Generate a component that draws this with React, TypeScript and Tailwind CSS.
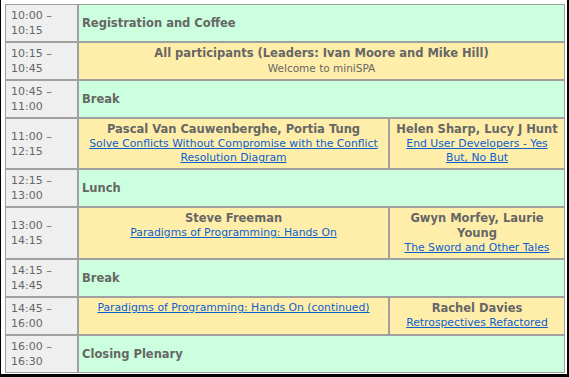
import React from "react";

const font = { fontFamily: '"DejaVu Sans", Verdana, sans-serif' };

function Time({ a, b }: { a: string; b: string }) {
  return (
    <td className="border border-[#a0a0a0] bg-[#efefef] align-middle px-[5px] py-[3px] text-[11px] leading-[15px] text-[#666]">
      <div>{a} –</div>
      <div>{b}</div>
    </td>
  );
}

function Green({ t }: { t: string }) {
  return (
    <td colSpan={2} className="border border-[#a0a0a0] bg-[#ccffdd] align-middle px-[3px] py-[3px] text-[11.5px] leading-[15px] font-bold text-[#666]">
      {t}
    </td>
  );
}

function Yellow({ name, link, span, sub }: { name?: string; link?: string[]; span?: number; sub?: string }) {
  return (
    <td colSpan={span} className="border border-[#a0a0a0] bg-[#ffeeaa] align-top text-center px-[3px] py-[3px] text-[#666]">
      {name && <div className="text-[11.5px] leading-[15px] font-bold">{name}</div>}
      {sub && <div className="text-[10.5px] leading-[14px]">{sub}</div>}
      {link && (
        <div className="text-[10.8px] leading-[14px]">
          <a href="#" className="text-[#0b5fd0] underline">
            {link.map((l, i) => (
              <React.Fragment key={i}>
                {i > 0 && <br />}
                {l}
              </React.Fragment>
            ))}
          </a>
        </div>
      )}
    </td>
  );
}

export default function App() {
  return (
    <div className="w-[569px] h-[377px] bg-white border-l border-r-2 border-b-[3px] border-black pt-[4px] pl-[4px] box-border" style={font}>
      <table className="border-separate border-spacing-0 table-fixed w-[560px]">
        <colgroup>
          <col className="w-[73px]" />
          <col className="w-[311px]" />
          <col className="w-[176px]" />
        </colgroup>
        <tbody>
          <tr>
            <Time a="10:00" b="10:15" />
            <Green t="Registration and Coffee" />
          </tr>
          <tr>
            <Time a="10:15" b="10:45" />
            <Yellow span={2} name="All participants (Leaders: Ivan Moore and Mike Hill)" sub="Welcome to miniSPA" />
          </tr>
          <tr>
            <Time a="10:45" b="11:00" />
            <Green t="Break" />
          </tr>
          <tr>
            <Time a="11:00" b="12:15" />
            <Yellow name="Pascal Van Cauwenberghe, Portia Tung" link={["Solve Conflicts Without Compromise with the Conflict", "Resolution Diagram"]} />
            <Yellow name="Helen Sharp, Lucy J Hunt" link={["End User Developers - Yes", "But, No But"]} />
          </tr>
          <tr>
            <Time a="12:15" b="13:00" />
            <Green t="Lunch" />
          </tr>
          <tr>
            <Time a="13:00" b="14:15" />
            <Yellow name="Steve Freeman" link={["Paradigms of Programming: Hands On"]} />
            <Yellow name="Gwyn Morfey, Laurie Young" link={["The Sword and Other Tales"]} />
          </tr>
          <tr>
            <Time a="14:15" b="14:45" />
            <Green t="Break" />
          </tr>
          <tr>
            <Time a="14:45" b="16:00" />
            <Yellow link={["Paradigms of Programming: Hands On (continued)"]} />
            <Yellow name="Rachel Davies" link={["Retrospectives Refactored"]} />
          </tr>
          <tr>
            <Time a="16:00" b="16:30" />
            <Green t="Closing Plenary" />
          </tr>
        </tbody>
      </table>
    </div>
  );
}
